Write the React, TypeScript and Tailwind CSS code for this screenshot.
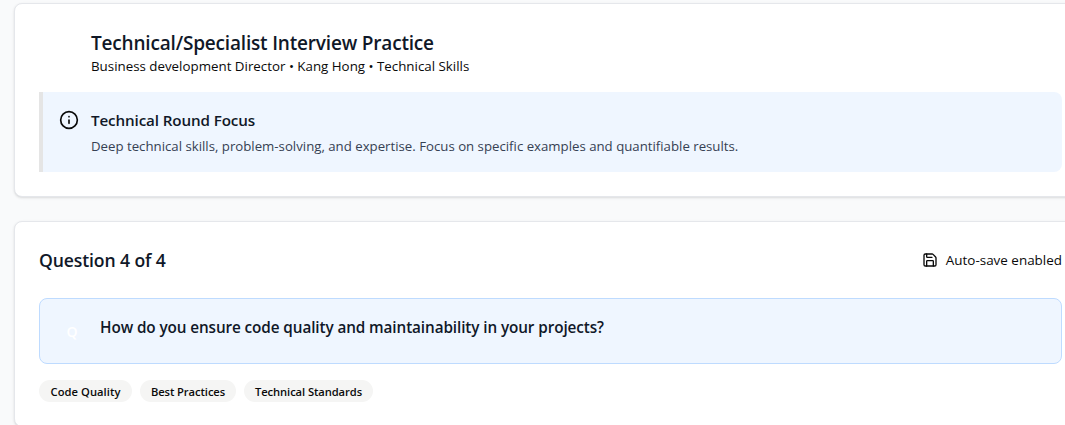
import { Info, Save } from "lucide-react";

const tags = [
  { label: "Code Quality", size: "w-[93px] tracking-[0.06px]" },
  { label: "Best Practices", size: "w-24 tracking-[-0.08px]" },
  { label: "Technical Standards", size: "w-[129px] tracking-[-0.08px]" },
];

export default function App() {
  return (
    <div className="h-[425px] w-full overflow-hidden bg-gray-50 pt-[3px] pl-3.5 font-['Open_Sans','Noto_Sans',sans-serif] text-[#0a0a0a]">
      <div className="flex w-[1073px] flex-col gap-6 whitespace-nowrap">
        <section className="rounded-lg border border-gray-200 bg-white p-6 shadow-sm">
          <header className="pl-[52px]">
            <h1 className="h-7 pt-px text-[19px] leading-7 font-[550] tracking-[-0.18px] text-gray-900">
              Technical/Specialist Interview Practice
            </h1>
            <p className="text-[13.33px] leading-5">
              Business development Director • Kang Hong • Technical Skills
            </p>
          </header>
          <div className="mt-4 flex h-20 gap-3 rounded-r-lg border-l-4 border-neutral-200 bg-[#eff6ff] p-4">
            <Info className="mt-0.5 size-5 shrink-0" />
            <div>
              <h2 className="text-[15.2px] leading-6 font-[550] tracking-[-0.12px] text-gray-900">
                Technical Round Focus
              </h2>
              <p className="mt-1 text-[13.22px] leading-5 text-gray-700">
                Deep technical skills, problem-solving, and expertise. Focus on specific examples and quantifiable results.
              </p>
            </div>
          </div>
        </section>

        <section className="rounded-lg border border-gray-200 bg-white p-6 shadow-sm">
          <header className="flex h-7 items-center justify-between">
            <h2 className="text-[17.6px] leading-7 font-[550] tracking-[-0.12px] text-gray-900">
              Question 4 of 4
            </h2>
            <div className="flex items-center gap-2 text-[13.45px] leading-5">
              <Save className="size-4" />
              <span>Auto-save enabled</span>
            </div>
          </header>
          <div className="mt-6 flex h-[66px] gap-3 rounded-lg border border-[#bedbff] bg-[#eff6ff] p-4">
            <div className="flex size-8 shrink-0 items-center justify-center text-[14px] font-semibold text-white">
              Q
            </div>
            <p className="text-[15.3px] leading-6 font-[550] tracking-[-0.1px] text-gray-900">
              How do you ensure code quality and maintainability in your projects?
            </p>
          </div>
          <div className="mt-4 flex gap-2">
            {tags.map((tag) => (
              <span
                key={tag.label}
                className={`flex h-[22px] items-center justify-center rounded-full bg-[#f5f5f4] pt-0.5 text-[11.2px] font-[550] ${tag.size}`}
              >
                {tag.label}
              </span>
            ))}
          </div>
        </section>
      </div>
    </div>
  );
}
